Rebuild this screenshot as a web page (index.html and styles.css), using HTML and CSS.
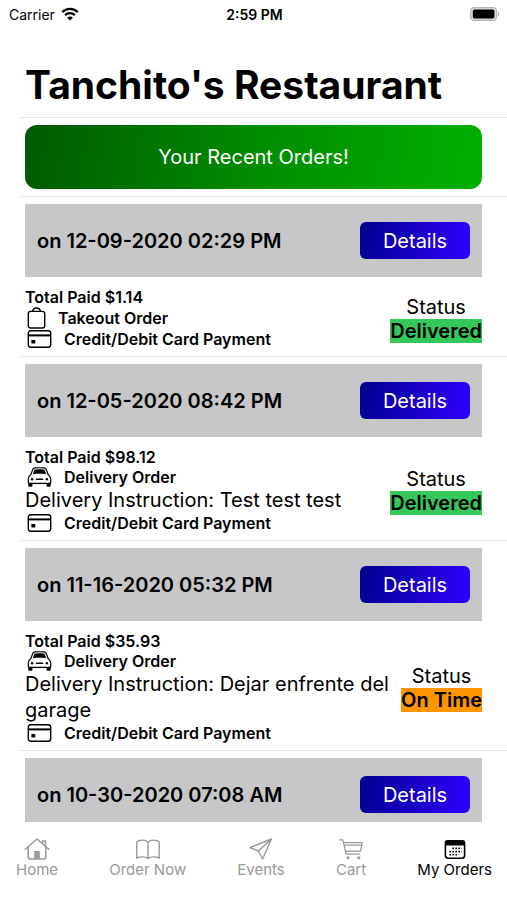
FILE: index.html
```html
<!DOCTYPE html>
<html lang="en">

<head>
   <meta charset="UTF-8">
   <meta name="viewport" content="width=device-width, initial-scale=1.0">
   <title>Tanchito's Restaurant</title>
   <link rel="stylesheet" href="styles.css">
</head>

<body>
   <!-- Shared icons -->
   <svg class="sprite" aria-hidden="true">
      <symbol id="icon-card" viewBox="0 0 24 18">
         <rect x="0.8" y="0.8" width="22.4" height="16.4" rx="2.4" fill="none" stroke="currentColor" stroke-width="1.4" />
         <path d="M1 4.4h22v2H1z" fill="currentColor" />
         <rect x="3.8" y="10" width="4" height="3.6" rx="0.8" fill="currentColor" />
      </symbol>
      <symbol id="icon-bag" viewBox="0 0 18 22">
         <rect x="0.8" y="4.4" width="16.4" height="16.6" rx="2.2" fill="none" stroke="currentColor" stroke-width="1.4" />
         <path d="M5.2 4.4C5.4 2.2 6.8 1 9 1s3.6 1.2 3.8 3.4" fill="none" stroke="currentColor" stroke-width="1.4" />
      </symbol>
      <symbol id="icon-car" viewBox="0 0 24 20">
         <path d="M3.4 7.6L5 3C5.4 1.6 6.2 1 7.6 0.9C10.5 0.7 13.5 0.7 16.4 0.9C17.8 1 18.6 1.6 19 3l1.6 4.6C22.4 8.8 23.2 10 23.2 12v3.4c0 .6-.4 1-1 1H1.8c-.6 0-1-.4-1-1V12c0-2 .8-3.2 2.6-4.4z" fill="none" stroke="currentColor" stroke-width="1.2" />
         <path d="M5.4 7.2L6.6 3.6c.2-.7.6-1 1.4-1.1c2.6-.2 5.4-.2 8 0c.8.1 1.2.4 1.4 1.1l1.2 3.6c-4.4-.5-8.8-.5-13.2 0z" fill="currentColor" />
         <path d="M0.8 16h4.2v2.4c0 .8-.5 1.3-1.3 1.3H2.1c-.8 0-1.3-.5-1.3-1.3zM19 16h4.2v2.4c0 .8-.5 1.3-1.3 1.3h-1.6c-.8 0-1.3-.5-1.3-1.3z" fill="currentColor" />
         <circle cx="4.6" cy="12.2" r="1.2" fill="currentColor" />
         <circle cx="19.4" cy="12.2" r="1.2" fill="currentColor" />
         <path d="M9 12.2h6" stroke="currentColor" stroke-width="1.6" stroke-linecap="round" />
      </symbol>
   </svg>

   <div class="app">
      <header class="status-bar">
         <span class="carrier">Carrier
            <svg class="wifi" viewBox="0 0 18 14" aria-hidden="true">
               <path d="M1.2 5.2C5.6 0.8 12.4 0.8 16.8 5.2" fill="none" stroke="currentColor" stroke-width="2.4" />
               <path d="M4.1 8.2C6.9 5.5 11.1 5.5 13.9 8.2" fill="none" stroke="currentColor" stroke-width="2.3" />
               <path d="M9 13.6L6.1 10.7C7.7 9.2 10.3 9.2 11.9 10.7z" fill="currentColor" />
            </svg>
         </span>
         <span class="time">2:59 PM</span>
         <svg class="battery" viewBox="0 0 30 14" aria-hidden="true">
            <rect x="0.6" y="0.6" width="26" height="12.8" rx="3.6" fill="#ddd" stroke="#b4b4b4" stroke-width="1.2" />
            <rect x="2.8" y="2.6" width="21.6" height="8.8" rx="1.6" fill="#000" />
            <path d="M28 4.6c1.8.5 1.8 4.3 0 4.8z" fill="#b4b4b4" />
         </svg>
      </header>

      <h1 class="title">Tanchito's Restaurant</h1>

      <main class="list">
         <div class="row">
            <h2 class="banner">Your Recent Orders!</h2>
         </div>

         <article class="row">
            <div class="order-head">
               <h3 class="order-date">on 12-09-2020 02:29 PM</h3>
               <button class="details-btn" type="button">Details</button>
            </div>
            <div class="order-body">
               <div class="order-info">
                  <p class="total">Total Paid $1.14</p>
                  <p class="line takeout"><svg class="icon-bag"><use href="#icon-bag" /></svg>Takeout Order</p>
                  <p class="line"><svg class="icon-card"><use href="#icon-card" /></svg>Credit/Debit Card Payment</p>
               </div>
               <div class="order-status">
                  <span>Status</span>
                  <strong class="badge delivered">Delivered</strong>
               </div>
            </div>
         </article>

         <article class="row">
            <div class="order-head">
               <h3 class="order-date">on 12-05-2020 08:42 PM</h3>
               <button class="details-btn" type="button">Details</button>
            </div>
            <div class="order-body">
               <div class="order-info">
                  <p class="total">Total Paid $98.12</p>
                  <p class="line"><svg class="icon-car"><use href="#icon-car" /></svg>Delivery Order</p>
                  <p class="instruction">Delivery Instruction: Test test test</p>
                  <p class="line"><svg class="icon-card"><use href="#icon-card" /></svg>Credit/Debit Card Payment</p>
               </div>
               <div class="order-status">
                  <span>Status</span>
                  <strong class="badge delivered">Delivered</strong>
               </div>
            </div>
         </article>

         <article class="row">
            <div class="order-head">
               <h3 class="order-date">on 11-16-2020 05:32 PM</h3>
               <button class="details-btn" type="button">Details</button>
            </div>
            <div class="order-body">
               <div class="order-info">
                  <p class="total">Total Paid $35.93</p>
                  <p class="line"><svg class="icon-car"><use href="#icon-car" /></svg>Delivery Order</p>
                  <p class="instruction">Delivery Instruction: Dejar enfrente del garage</p>
                  <p class="line"><svg class="icon-card"><use href="#icon-card" /></svg>Credit/Debit Card Payment</p>
               </div>
               <div class="order-status">
                  <span>Status</span>
                  <strong class="badge on-time">On Time</strong>
               </div>
            </div>
         </article>

         <article class="row">
            <div class="order-head">
               <h3 class="order-date">on 10-30-2020 07:08 AM</h3>
               <button class="details-btn" type="button">Details</button>
            </div>
         </article>
      </main>

      <nav class="tab-bar">
         <a class="tab" href="#home">
            <svg viewBox="0 0 26 22" aria-hidden="true">
               <path d="M1.2 11.2L13 1l11.8 10.2" fill="none" stroke="currentColor" stroke-width="1.5" stroke-linecap="round" stroke-linejoin="round" />
               <path d="M4.2 9v10.4c0 .9.6 1.5 1.5 1.5h14.6c.9 0 1.5-.6 1.5-1.5V9M18.6 5.6V3h2.8v5" fill="none" stroke="currentColor" stroke-width="1.5" />
               <path d="M10.2 13h5.6v8h-5.6z" fill="currentColor" />
            </svg>
            Home
         </a>
         <a class="tab" href="#menu">
            <svg viewBox="0 0 26 22" aria-hidden="true">
               <path d="M13 4.2C10.6 1.6 4.6 1.4 1.8 4v16.2c3-1.8 8.4-1.8 11.2.2c2.8-2 8.2-2 11.2-.2V4C21.4 1.4 15.4 1.6 13 4.2zM13 4.2v16.2" fill="none" stroke="currentColor" stroke-width="1.4" stroke-linejoin="round" />
            </svg>
            Order Now
         </a>
         <a class="tab" href="#events">
            <svg viewBox="0 0 26 22" aria-hidden="true">
               <path d="M23.4 1L2 9.6l8.4 3.4L14.6 21zM23.4 1L10.4 13" fill="none" stroke="currentColor" stroke-width="1.4" stroke-linejoin="round" />
            </svg>
            Events
         </a>
         <a class="tab" href="#cart">
            <svg viewBox="0 0 26 22" aria-hidden="true">
               <path d="M1.6 1.8h3.2l3.4 14.4h13.4M5.6 4.6h18.6l-1.6 8.4L7.4 13.4M6 7.2h17.6" fill="none" stroke="currentColor" stroke-width="1.3" stroke-linecap="round" stroke-linejoin="round" />
               <circle cx="10" cy="19.8" r="1.6" fill="currentColor" />
               <circle cx="20.8" cy="19.8" r="1.6" fill="currentColor" />
            </svg>
            Cart
         </a>
         <a class="tab active" href="#orders" aria-current="page">
            <svg viewBox="0 0 26 22" aria-hidden="true">
               <rect x="3.4" y="2.8" width="19.2" height="17.4" rx="2.6" fill="none" stroke="currentColor" stroke-width="1.6" />
               <path d="M3 7.4V5c0-1.8 1-2.8 2.8-2.8h14.4C22 2.2 23 3.2 23 5v2.4z" fill="currentColor" />
               <path d="M10.4 10.4h9.4M7.4 13.6h12.4M7.4 16.8h9.2" stroke="currentColor" stroke-width="1.6" stroke-dasharray="1.6 1.4" />
            </svg>
            My Orders
         </a>
      </nav>
   </div>
</body>

</html>
```

FILE: styles.css
```css
* {
   box-sizing: border-box;
}

body {
   margin: 0;
   font-family: Inter, "Liberation Sans", sans-serif;
   font-size: 20px;
   color: #000;
   background: #fff;
}

h1,
h2,
h3,
p {
   margin: 0;
}

.sprite {
   position: absolute;
   width: 0;
   height: 0;
}

.app {
   display: flex;
   flex-direction: column;
   height: 100vh;
}

/* Status bar */
.status-bar {
   display: grid;
   grid-template-columns: 1fr auto 1fr;
   align-items: center;
   flex: none;
   height: 28px;
   padding: 0 7px 0 9px;
   font-size: 14px;
}

.carrier {
   display: flex;
   align-items: center;
   gap: 6px;
}

.wifi {
   width: 18px;
   height: 14px;
}

.time {
   font-weight: 600;
}

.battery {
   justify-self: end;
   width: 30px;
   height: 14px;
}

.title {
   flex: none;
   padding: 33px 25px 8px;
   font-size: 39px;
   font-weight: 700;
   line-height: 48px;
}

/* Orders list */
.list {
   flex: 1;
   min-height: 0;
   overflow: hidden;
}

.row {
   margin-left: 20px;
   padding: 7px 25px 7px 5px;
   border-top: 1px solid #e6e6e6;
}

.banner {
   padding: 20px;
   border-radius: 12px;
   background: linear-gradient(100deg, #005a00, #009000 55%, #00b000);
   color: #fff;
   font-size: 20px;
   font-weight: 400;
   line-height: 24px;
   text-align: center;
}

.order-head {
   display: flex;
   align-items: center;
   justify-content: space-between;
   padding: 18px 12px;
   background: #c7c7c9;
}

.order-date {
   font-size: 20px;
   font-weight: 600;
   line-height: 26px;
}

.details-btn {
   width: 110px;
   height: 37px;
   padding: 0;
   border: 0;
   border-radius: 6px;
   background: linear-gradient(100deg, #00008f, #3000ff);
   color: #fff;
   font-family: inherit;
   font-size: 20px;
}

.order-body {
   display: flex;
   align-items: center;
   justify-content: space-between;
   gap: 6px;
   padding-top: 10px;
}

.total,
.line {
   font-size: 16px;
   font-weight: 600;
   line-height: 20px;
}

.line {
   display: flex;
   align-items: center;
   gap: 12px;
   padding-left: 2px;
}

.takeout {
   line-height: 22px;
}

.icon-card {
   width: 25px;
   height: 18px;
}

.icon-bag {
   width: 19px;
   height: 22px;
}

.icon-car {
   width: 25px;
   height: 20px;
}

.instruction {
   line-height: 26px;
}

.order-status {
   display: flex;
   flex-direction: column;
   align-items: center;
   flex: none;
   padding-top: 1px;
   line-height: 24px;
}

.badge {
   font-weight: 600;
}

.delivered {
   background: #34c759;
}

.on-time {
   background: #ff9500;
}

/* Bottom tabs */
.tab-bar {
   display: flex;
   justify-content: space-between;
   flex: none;
   height: 78px;
   padding: 16px 15px 0 16px;
}

.tab {
   display: flex;
   flex-direction: column;
   align-items: center;
   color: #999;
   font-size: 15px;
   line-height: 20px;
   text-decoration: none;
}

.tab svg {
   width: 26px;
   height: 22px;
}

.active {
   color: #000;
}
```
